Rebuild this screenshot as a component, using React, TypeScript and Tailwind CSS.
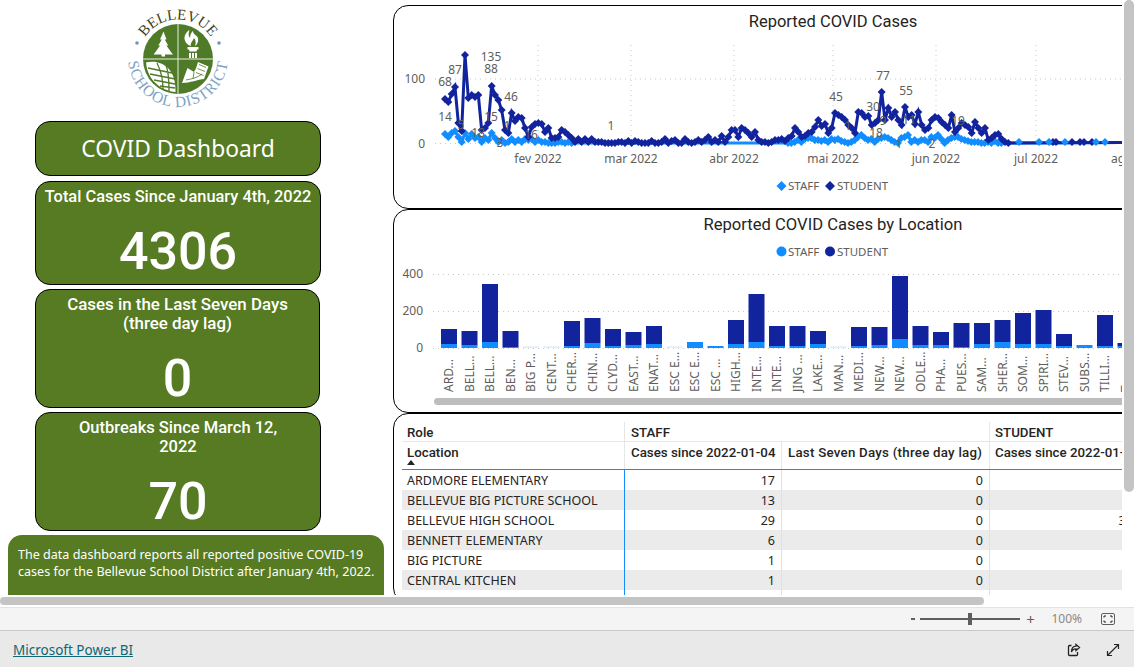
const din = "font-['Roboto',sans-serif]";
const segoe = "font-['Noto_Sans',sans-serif]";

// y values read off the chart, one point per day
const studentA = [99, 102, 94, 87, 123, 131, 55, 98, 95, 97, 95, 130, 128, 123, 86, 95, 100, 110, 130, 133, 113, 121, 117, 118, 128, 137, 127, 124, 123, 124, 132, 128, 138, 138, 137, 130, 132, 135, 138, 142, 139, 142, 139, 142, 139, 142, 142, 142, 143, 143, 143, 143, 142, 142, 143, 141, 143, 141, 142, 143, 143, 143, 141, 143, 143, 142, 139, 143, 141, 140, 143, 143, 139, 142, 143, 142, 140, 142, 140, 137, 142, 140, 142, 136, 142, 137, 130, 130, 137, 128, 130, 133, 137, 132, 140, 142, 142, 143, 142];
const studentB = [140, 140, 139, 141, 138, 136, 128, 132, 137, 136, 133, 132, 127, 120, 126, 124, 133, 128, 113, 115, 117, 120, 125, 128, 133, 112, 113, 117, 116, 125, 123, 120, 92, 120, 108, 117, 112, 120, 125, 107, 117, 115, 124, 112, 125, 130, 128, 120, 117, 118, 122, 125, 128, 115, 132, 128, 123, 125, 127, 133, 122, 128, 133, 128, 140, 138, 135, 134, 139, 142, 143];
const staffA = [134, 137, 133, 131, 137, 142, 133, 139, 134, 138, 137, 142, 138, 140, 133, 138, 142, 140, 143, 142, 139, 142, 140, 142, 139, 140, 139, 142, 140, 142, 142, 143, 143, 143, 142, 142, 143, 142, 143];
const staffB = [143, 143, 142, 140, 142, 139, 138, 138, 140, 140, 141, 140, 142, 139, 140, 139, 141, 142, 143, 142, 140, 137, 135, 138, 140, 139, 142, 139, 138, 137, 138, 140, 142, 143, 138, 137, 135, 142, 140, 142, 140, 140, 142, 137, 138, 135, 139, 143, 140, 138, 137, 137, 139, 140, 141, 142, 142, 142, 143, 143, 142, 143, 141, 143, 143];

const studentPts = [
  ...studentA.map((y, i) => [444 + i * 3.333, y]),
  ...studentB.map((y, i) => [774 + i * 3.333, y]),
];
const staffPts = [
  ...staffA.map((y, i) => [444 + i * 3.333, y]),
  ...staffB.map((y, i) => [787 + i * 3.333, y]),
];
const staffLate = [1018, 1038, 1048, 1064, 1095, 1104];
const studentLate = [1052, 1055, 1071, 1079, 1083, 1091];
const months = [
  { label: 'fev 2022', x: 537 },
  { label: 'mar 2022', x: 630 },
  { label: 'abr 2022', x: 733 },
  { label: 'mai 2022', x: 832 },
  { label: 'jun 2022', x: 935 },
  { label: 'jul 2022', x: 1035 },
  { label: 'ago 2022', x: 1136 },
];
const lineLabels: [string, number, number][] = [
  ['68', 444, 86], ['87', 454, 74], ['135', 490, 61], ['88', 490, 73], ['46', 510, 101],
  ['14', 444, 121], ['15', 490, 121], ['5', 460, 129], ['1', 506, 130], ['18', 477, 137],
  ['3', 499, 147], ['16', 530, 139], ['1', 610, 130], ['45', 835, 101], ['77', 882, 80],
  ['30', 872, 111], ['55', 905, 95], ['18', 875, 137], ['9', 882, 125], ['11', 908, 124],
  ['19', 957, 125], ['1', 847, 130], ['1', 898, 148], ['2', 931, 148],
];

// [label, total top, staff top] in chart pixels
const bars: [string, number, number][] = [
  ['ARD…', 329, 344], ['BELL…', 331, 345], ['BELL…', 284, 342], ['BEN…', 331, 347],
  ['BIG P…', 347, 347], ['CENT…', 347, 347], ['CHER…', 321, 346], ['CHIN…', 318, 343],
  ['CLYD…', 329, 346], ['EAST…', 332, 345], ['ENAT…', 326, 344], ['ESC E…', 347, 347],
  ['ESC E…', 342, 342], ['ESC …', 346, 346], ['HIGH…', 320, 344], ['INTE…', 294, 342],
  ['INTE…', 326, 346], ['JING …', 326, 346], ['LAKE…', 331, 344], ['MAN…', 347, 347],
  ['MEDI…', 327, 346], ['NEW…', 327, 345], ['NEW…', 276, 339], ['ODLE…', 326, 345],
  ['PHA…', 332, 345], ['PUES…', 323, 347], ['SAM…', 323, 344], ['SHER…', 320, 342],
  ['SOM…', 313, 344], ['SPIRI…', 310, 344], ['STEV…', 334, 346], ['SUBS…', 345, 345],
  ['TILLI…', 315, 346], ['T…', 343, 346],
];

const rows = [
  ['ARDMORE ELEMENTARY', '17', '0', ''],
  ['BELLEVUE BIG PICTURE SCHOOL', '13', '0', ''],
  ['BELLEVUE HIGH SCHOOL', '29', '0', '317'],
  ['BENNETT ELEMENTARY', '6', '0', ''],
  ['BIG PICTURE', '1', '0', ''],
  ['CENTRAL KITCHEN', '1', '0', ''],
  ['', '', '', ''],
];

function Diamond({ x, y, r, fill }: { x: number; y: number; r: number; fill: string }) {
  return <polygon points={`${x},${y - r} ${x + r},${y} ${x},${y + r} ${x - r},${y}`} fill={fill} />;
}

function Logo() {
  return (
    <svg viewBox="120 5 120 110" className="h-[110px] w-[120px]">
      <defs>
        <path id="arcTop" d="M 138.500 59 A 39.500 39.500 0 0 1 217.500 59" />
        <path id="arcBottom" d="M 128 57 A 50 50 0 0 0 228 57" />
      </defs>
      <circle cx="178" cy="59" r="35" fill="#4f7a28" />
      <path d="M178 24V94M143 59H213" stroke="#e8efe0" strokeWidth="1" />
      {/* tree */}
      <path d="M163.500 31.500l3 8h-1.800l3.500 6h-1.800l4.600 6.500 2 2.500h-8v2h-3.500v-2h-8l2-2.500 4.600-6.500h-1.800l3.500-6h-1.800z" fill="#fff" />
      {/* torch */}
      <path d="M191 46c-4-1-7-5-6.500-9 .5-3 3-6 5-7-1 3-1.500 6 .5 8 0-3 1.500-6 3-7 0 3 3 4 4.500 6 1.500 3 .5 7-2.500 9 1-3 1-6-1-8-1 3-4 5-3 8z" fill="#fff" />
      <path d="M187.500 47h11v2.500h-1.500l-.5 2h-7l-.5-2h-1.500zM189 53h2v5h-2zM192 53h2v5h-2zM195 53h2v5h-2z" fill="#fff" />
      {/* globe */}
      <path d="M146 62.500c8-2 18 0 24 8 4.500 6 5.500 14 5.500 21.500-11-1-20-7-25-15-2.500-4-4-9-4.500-14.500z" fill="#fff" />
      <path d="M148 68l24 5M150 74l25 5M154 80l21 4M160 86l15 2M157 63c4 8 6 18 6 26M166 65c3 8 3 18 3 26" stroke="#4f7a28" strokeWidth="1.300" fill="none" />
      {/* book */}
      <path d="M182 83l5.500-15 6.500 4c2.500-4 3-7 4-10l10.500 4.500-4.500 12.500c-6 .5-14 4-22 4z" fill="#fff" />
      <path d="M194 72l-1 7M186 80c5-1 11-2 16-6M199 64.500l7 3M197.500 68.500l7.500 3M196 72.500l7.500 3" stroke="#4f7a28" strokeWidth="0.800" fill="none" />
      <text className="font-['Liberation_Serif',serif] text-[15px]" fill="#3f3f22">
        <textPath href="#arcTop" startOffset="50%" textAnchor="middle">BELLEVUE</textPath>
      </text>
      <text className="font-['Liberation_Serif',serif] text-[15.500px] tracking-[0.800px]" fill="#7fa3c2">
        <textPath href="#arcBottom" startOffset="50%" textAnchor="middle">SCHOOL DISTRICT</textPath>
      </text>
      <circle cx="137" cy="43" r="1.800" fill="#6f97b8" />
      <circle cx="219" cy="43" r="1.800" fill="#6f97b8" />
    </svg>
  );
}

function StatCard({ title, value, className, titleSize }: { title: string; value: string; className: string; titleSize: string }) {
  return (
    <div className={`ml-[35px] flex flex-col items-center justify-between rounded-[15px] border border-black bg-[#567b22] text-center text-white ${className}`}>
      <div className={`${din} ${titleSize} leading-[19px] font-medium`}>{title}</div>
      <div className={`${din} text-[52px] leading-[56px] font-medium`}>{value}</div>
    </div>
  );
}

function LineChart() {
  const student = studentPts.map((p) => p.join(',')).join(' ');
  const staff = staffPts.map((p) => p.join(',')).join(' ');
  return (
    <svg viewBox="393 30 729 175" className="h-[175px] w-[729px]">
      {months.slice(0, 6).map((m) => (
        <line key={m.x} x1={m.x} x2={m.x} y1="45" y2="143" stroke="#c8c8c8" strokeDasharray="1 4" />
      ))}
      <line x1="434" x2="1122" y1="79" y2="79" stroke="#c8c8c8" strokeDasharray="1 4" />
      <line x1="434" x2="1122" y1="143.500" y2="143.500" stroke="#c8c8c8" strokeDasharray="1 4" />
      <g className={`${segoe} text-[12px]`} fill="#605e5c">
        <text x="424" y="83" textAnchor="end">100</text>
        <text x="424" y="148" textAnchor="end">0</text>
        {months.map((m) => (
          <text key={m.x} x={m.x} y="163" textAnchor="middle">{m.label}</text>
        ))}
      </g>
      <polyline points={`${staff} 1122,142.500`} fill="none" stroke="#118dff" strokeWidth="3" />
      {staffPts.map(([x, y], i) => <Diamond key={i} x={x} y={y} r={4} fill="#118dff" />)}
      <polyline points={`${student} 1122,142.500`} fill="none" stroke="#12239e" strokeWidth="3" />
      {studentPts.map(([x, y], i) => <Diamond key={i} x={x} y={y} r={4} fill="#12239e" />)}
      {studentLate.map((x) => <Diamond key={x} x={x} y={142} r={4} fill="#12239e" />)}
      {staffLate.map((x) => <Diamond key={x} x={x} y={142} r={4} fill="#118dff" />)}
      <g className={`${segoe} text-[12px]`} fill="#605e5c">
        {lineLabels.map(([t, x, y], i) => (
          <text key={i} x={x} y={y} textAnchor="middle">{t}</text>
        ))}
      </g>
      <Diamond x={780.500} y={186} r={5} fill="#118dff" />
      <Diamond x={829} y={186} r={5} fill="#12239e" />
      <g className={`${segoe} text-[11.500px]`} fill="#605e5c">
        <text x="787" y="190">STAFF</text>
        <text x="836" y="190">STUDENT</text>
      </g>
    </svg>
  );
}

function BarChart() {
  return (
    <svg viewBox="393 240 729 170" className="h-[170px] w-[729px]">
      <circle cx="780.500" cy="251.500" r="5" fill="#118dff" />
      <circle cx="829" cy="251.500" r="5" fill="#12239e" />
      <g className={`${segoe} text-[11.500px]`} fill="#605e5c">
        <text x="787" y="256">STAFF</text>
        <text x="836" y="256">STUDENT</text>
      </g>
      {[274, 311, 348].map((y) => (
        <line key={y} x1="432" x2="1122" y1={y + 0.500} y2={y + 0.500} stroke="#c8c8c8" strokeDasharray="1 4" />
      ))}
      <g className={`${segoe} text-[12px]`} fill="#605e5c">
        <text x="422" y="278" textAnchor="end">400</text>
        <text x="422" y="315" textAnchor="end">200</text>
        <text x="422" y="352" textAnchor="end">0</text>
      </g>
      {bars.map(([label, top, staffTop], i) => {
        const x = 440 + i * 20.5;
        return (
          <g key={i}>
            {top === 347 ? (
              <rect x={x} y="346" width="16" height="2" fill="#e6f0fa" />
            ) : (
              <>
                <rect x={x} y={top} width="16" height={staffTop - top} fill="#12239e" />
                <rect x={x} y={staffTop} width="16" height={348 - staffTop} fill="#118dff" />
              </>
            )}
            <text
              x={x + 8}
              y="388"
              transform={`rotate(-90 ${x + 12} 388)`}
              className={`${segoe} text-[12px]`}
              fill="#605e5c"
            >
              {label}
            </text>
          </g>
        );
      })}
      <rect x="433" y="398" width="700" height="7" rx="3.500" fill="#bdbdbd" />
    </svg>
  );
}

export default function App() {
  return (
    <div className={`flex h-[667px] w-[1134px] flex-col overflow-hidden bg-white ${segoe}`}>
      <div className="flex h-[595px] shrink-0 overflow-hidden">
        {/* left column */}
        <div className="flex w-[393px] shrink-0 flex-col">
          <div className="flex h-[121px] shrink-0 items-start pt-[5px] pl-[120px]">
            <Logo />
          </div>
          <div className="ml-[35px] flex h-[55px] w-[286px] shrink-0 items-center justify-center rounded-[15px] border border-black bg-[#567b22] pt-[2px] text-[22.800px] text-white">
            COVID Dashboard
          </div>
          <StatCard title="Total Cases Since January 4th, 2022" value="4306" titleSize="text-[16.400px]" className="mt-[5px] h-[104px] w-[286px] shrink-0 pt-[5px] pb-[4px] whitespace-nowrap" />
          <StatCard title="Cases in the Last Seven Days (three day lag)" value="0" titleSize="text-[16.900px]" className="mt-[4px] h-[119px] w-[285px] shrink-0 px-6 pt-[5px]" />
          <StatCard title="Outbreaks Since March 12, 2022" value="70" titleSize="text-[16.500px]" className="mt-[4px] h-[119px] w-[286px] shrink-0 px-10 pt-[5px]" />
          <div className="mt-[4px] ml-[8px] h-[80px] w-[376px] shrink-0 rounded-t-[14px] bg-[#567b22] pt-[11px] pr-[3px] pl-[10px] text-[12.550px] leading-[17px] text-white">
            The data dashboard reports all reported positive COVID-19 cases for the Bellevue School District after January 4th, 2022.
          </div>
        </div>

        {/* report panels */}
        <div className="w-[729px] shrink-0 overflow-hidden pt-[5px]">
          <div className="h-[204px] w-[880px] rounded-[15px] border border-black">
            <div className={`${din} h-[24px] pt-[5px] text-center text-[16.500px] leading-[22px] text-[#252423]`}>Reported COVID Cases</div>
            <LineChart />
          </div>
          <div className="h-[204px] w-[880px] rounded-[15px] border border-black">
            <div className={`${din} h-[30px] pt-[4px] text-center text-[16.600px] leading-[22px] text-[#252423]`}>Reported COVID Cases by Location</div>
            <BarChart />
          </div>
          <div className="h-[190px] w-[880px] overflow-hidden rounded-[15px] border border-black pt-[8px] pl-[8px] text-[12.500px] text-[#252423]">
            <div className={`${din} flex h-[20px] border-b border-[#e6e6e6] text-[13.300px] leading-[21px] font-medium`}>
              <div className="w-[223px] border-r border-[#e6e6e6] pl-[5px]">Role</div>
              <div className="w-[365px] border-r border-[#e6e6e6] pl-[6px]">STAFF</div>
              <div className="w-[156px] pl-[5px]">STUDENT</div>
            </div>
            <div className={`${din} flex h-[28px] border-b border-[#118dff] text-[13.300px] leading-[21px] font-medium`}>
              <div className="relative w-[223px] border-r border-[#e6e6e6] pl-[5px]">
                Location
                <svg viewBox="0 0 8 5" className="absolute top-[18px] left-[5px] h-[5px] w-[8px]">
                  <polygon points="4,0 8,5 0,5" fill="#252423" />
                </svg>
              </div>
              <div className="w-[157px] border-r border-[#e6e6e6] pl-[6px]">Cases since 2022-01-04</div>
              <div className="w-[208px] border-r border-[#e6e6e6] pl-[6px] tracking-[0.250px]">Last Seven Days (three day lag)</div>
              <div className="w-[156px] pl-[5px] whitespace-nowrap">Cases since 2022-01-04</div>
            </div>
            {rows.map((r, i) => (
              <div key={i} className={`flex h-[20px] items-center ${i % 2 === 1 ? 'bg-[#ebebeb]' : 'bg-white'}`}>
                <div className="h-full w-[223px] truncate border-r border-[#118dff] pl-[5px] leading-[22px]">{r[0]}</div>
                <div className="h-full w-[157px] border-r border-[#e0e0e0] pr-[6px] text-right leading-[22px]">{r[1]}</div>
                <div className="h-full w-[208px] border-r border-[#e0e0e0] pr-[6px] text-right leading-[22px]">{r[2]}</div>
                <div className="h-full w-[156px] pr-[6px] text-right leading-[22px]">{r[3]}</div>
              </div>
            ))}
          </div>
        </div>

        {/* vertical scrollbar */}
        <div className="w-[12px] shrink-0 pl-[2px]">
          <div className="h-[492px] w-[10px] rounded-[5px] bg-[#c4c4c4]" />
        </div>
      </div>

      {/* horizontal scrollbar */}
      <div className="h-[12px] shrink-0 pt-[2px]">
        <div className="h-[8px] w-[984px] rounded-[4px] bg-[#c4c4c4]" />
      </div>

      {/* zoom bar */}
      <div className="flex h-[24px] shrink-0 items-center justify-end border-y border-t-[#e3e3e3] border-b-[#c8c8c8] bg-[#f4f4f4] pr-[19px] text-[12px] text-[#605e5c]">
        <div className="mr-[5px] h-[2px] w-[4px] bg-[#605e5c]" />
        <div className="relative h-[2px] w-[100px] bg-[#605e5c]">
          <div className="absolute top-[-5px] left-[48px] h-[12px] w-[4px] bg-[#605e5c]" />
        </div>
        <span className="ml-[5px] w-[10px] text-center text-[15px] leading-[15px]">+</span>
        <span className="ml-[16px] text-[#8a8886]">100%</span>
        <svg viewBox="0 0 14 12" className="ml-[19px] h-[12px] w-[14px]" fill="none" stroke="#605e5c">
          <rect x="0.500" y="0.500" width="13" height="11" rx="1.500" />
          <path d="M3 4.500V3h2M9 3h2v1.500M3 7.500V9h2M9 9h2V7.500" stroke="#252423" />
        </svg>
      </div>

      {/* footer */}
      <div className="flex flex-1 items-center justify-between bg-[#e9e9e9] pr-[14px] pl-[13px]">
        <span className="pt-[3px] text-[13.500px] text-[#0f6674] underline">Microsoft Power BI</span>
        <div className="flex items-center gap-[25px] pt-[2px]">
          <svg viewBox="0 0 14 14" className="h-[14px] w-[14px]" fill="none" stroke="#252423" strokeWidth="1.300">
            <path d="M9 1.500l3.500 3L9 7.500V5.800C6.500 5.800 5 7 4.500 9 4.500 6 6 3.300 9 3.200z" />
            <path d="M4.500 2.500H2.500a1 1 0 0 0-1 1v8a1 1 0 0 0 1 1h7a1 1 0 0 0 1-1V9" />
          </svg>
          <svg viewBox="0 0 14 14" className="h-[14px] w-[14px]" fill="none" stroke="#252423" strokeWidth="1.200">
            <path d="M1.500 12.500L12.500 1.500M8 1.500h4.500V6M1.500 8v4.500H6" />
          </svg>
        </div>
      </div>
    </div>
  );
}
